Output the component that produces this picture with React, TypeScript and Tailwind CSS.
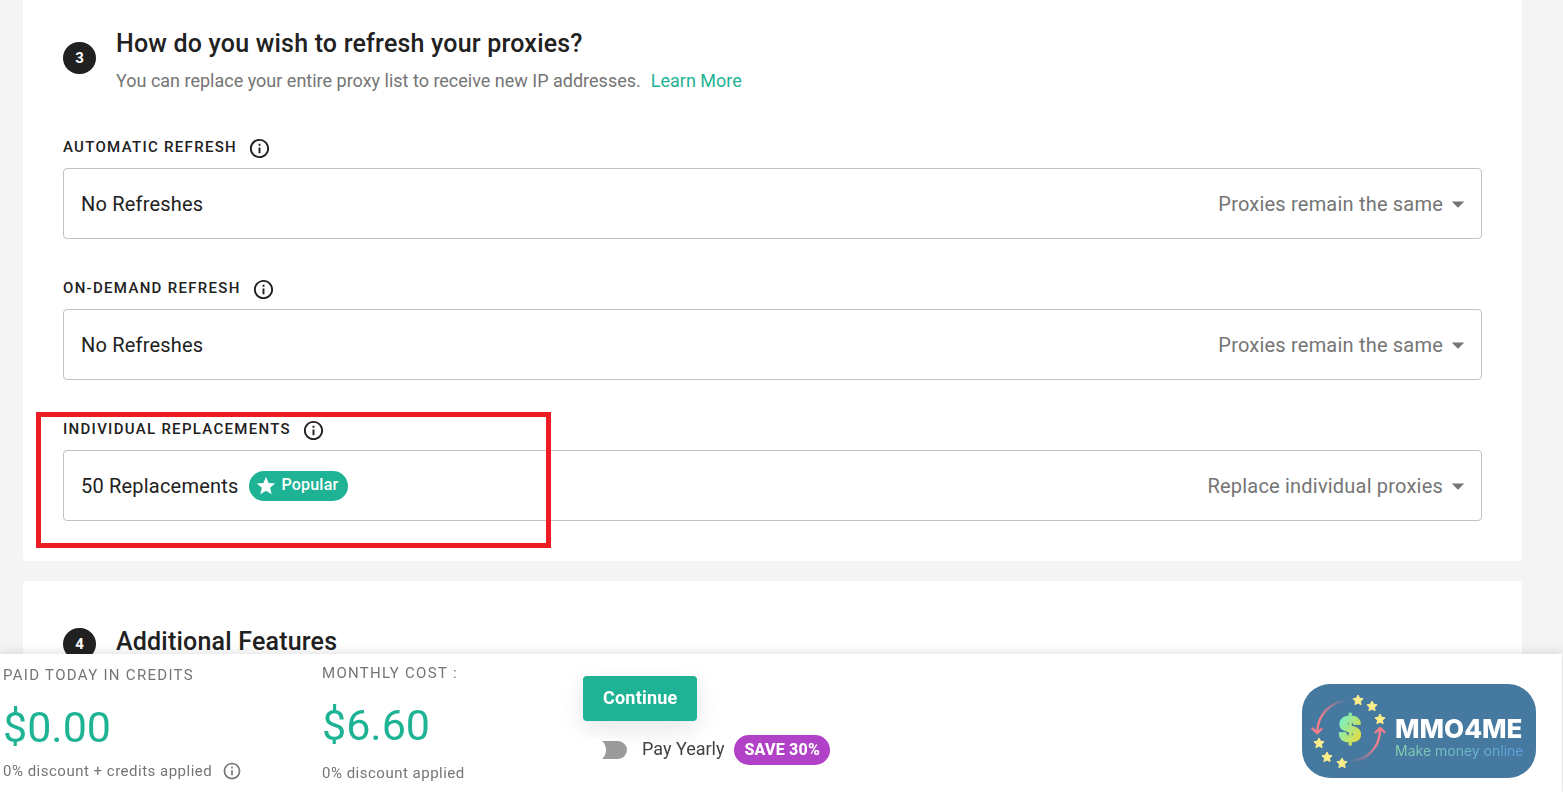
import { useState } from "react";
import { MdArrowDropDown, MdInfoOutline, MdStar } from "react-icons/md";

interface RefreshField {
  id: string;
  label: string;
  value: string;
  note: string;
  popular?: boolean;
  marked?: boolean;
}

const fields: RefreshField[] = [
  {
    id: "automatic",
    label: "AUTOMATIC REFRESH",
    value: "No Refreshes",
    note: "Proxies remain the same",
  },
  {
    id: "on-demand",
    label: "ON-DEMAND REFRESH",
    value: "No Refreshes",
    note: "Proxies remain the same",
  },
  {
    id: "individual",
    label: "INDIVIDUAL REPLACEMENTS",
    value: "50 Replacements",
    note: "Replace individual proxies",
    popular: true,
    marked: true,
  },
];

const stars = [
  [56, 16],
  [70, 22],
  [78, 35],
  [17, 59],
  [25, 73],
  [40, 79],
];

function StepNumber({ value }: { value: number }) {
  return (
    <span className="flex h-8 w-[33px] shrink-0 items-center justify-center rounded-full bg-[#212121] text-[15px] font-bold text-white">
      {value}
    </span>
  );
}

function Field({ field }: { field: RefreshField }) {
  return (
    <div className="relative">
      <div className="flex h-6 items-center gap-[11px]">
        <label
          htmlFor={field.id}
          className="pb-0.5 text-[15px] leading-5 font-medium tracking-[1.3px]"
        >
          {field.label}
        </label>
        <MdInfoOutline className="h-[23px] w-[23px]" />
      </div>
      <div className="mt-2 flex h-[71px] items-center rounded border border-[#c2c2c2] px-[17px] text-xl tracking-[0.2px]">
        <select
          id={field.id}
          className="appearance-none bg-transparent [field-sizing:content] outline-none"
        >
          <option>{field.value}</option>
        </select>
        {field.popular && (
          <span className="ml-[11px] flex h-[30px] items-center gap-1 rounded-full bg-[#1db394] pr-2.5 pl-1.5 text-base font-medium text-white">
            <MdStar className="h-[22px] w-[22px]" />
            <span className="pb-0.5">Popular</span>
          </span>
        )}
        <span className="ml-auto text-[#757575]">{field.note}</span>
        <MdArrowDropDown className="-mr-[9px] h-[30px] w-[30px] text-[#757575]" />
      </div>
      {field.marked && (
        <div className="pointer-events-none absolute -top-[6px] -left-[27px] h-[136px] w-[515px] border-5 border-[#ed1c24]" />
      )}
    </div>
  );
}

function Logo() {
  return (
    <a
      href="#"
      className="flex h-[94px] w-[234px] items-center rounded-[28px] bg-[#46799f]"
    >
      <svg viewBox="0 0 92 94" className="h-[94px] w-[92px] shrink-0">
        <defs>
          <linearGradient id="dollar" x1="0" y1="0" x2="1" y2="1">
            <stop offset="0.2" stopColor="#7df0c0" />
            <stop offset="0.85" stopColor="#e6dc3c" />
          </linearGradient>
          <linearGradient id="arcLeft" x1="1" y1="0" x2="0.2" y2="0.7">
            <stop offset="0" stopColor="#f47f8b" stopOpacity="0" />
            <stop offset="1" stopColor="#f47f8b" />
          </linearGradient>
          <linearGradient id="arcRight" x1="0" y1="1" x2="0.8" y2="0.3">
            <stop offset="0" stopColor="#f47f8b" stopOpacity="0" />
            <stop offset="1" stopColor="#f47f8b" />
          </linearGradient>
        </defs>
        <g fill="none" strokeWidth="2.4" strokeLinecap="round" strokeLinejoin="round">
          <path d="M46 16.5C29 17 15 31 15.3 49" stroke="url(#arcLeft)" />
          <path d="M10.500 44.500L15.300 49L19.500 45" stroke="#f47f8b" />
          <path d="M48 77C65 77 78.500 63 78 44.500" stroke="url(#arcRight)" />
          <path d="M73.500 48.500L78 44L82.500 48.200" stroke="#f47f8b" />
        </g>
        {stars.map(([x, y]) => (
          <path
            key={x}
            transform={`translate(${x} ${y})`}
            d="M0-5L1.600-1.800L5-1.300L2.500 1.200L3.100 4.700L0 3L-3.100 4.700L-2.500 1.200L-5-1.300L-1.600-1.800Z"
            fill="#fdee8c"
            stroke="#fdee8c"
            strokeLinejoin="round"
          />
        ))}
        <text
          x="48"
          y="58"
          textAnchor="middle"
          fontFamily="Inter, sans-serif"
          fontSize="35"
          fontWeight="900"
          fill="url(#dollar)"
          stroke="url(#dollar)"
          strokeLinejoin="round"
        >
          $
        </text>
      </svg>
      <span className="flex flex-col pt-4 pl-px font-[Inter,sans-serif] whitespace-nowrap">
        <span className="text-[26px] leading-6 font-extrabold text-white">
          MMO4ME
        </span>
        <span className="bg-linear-to-r from-[#85d3ab] to-[#5e9fdd] bg-clip-text text-sm leading-5 text-transparent">
          Make money online
        </span>
      </span>
    </a>
  );
}

function App() {
  const [yearly, setYearly] = useState(false);

  return (
    <div className="h-screen overflow-hidden bg-[#f4f4f4] font-[Roboto,sans-serif] text-[#212121]">
      <main className="flex flex-col gap-5 pr-[41px] pl-[23px]">
        <section className="rounded-b bg-white px-10 pt-7 pb-10">
          <div className="flex gap-5">
            <div className="pt-3.5">
              <StepNumber value={3} />
            </div>
            <div>
              <h2 className="text-[25px] leading-8 font-medium tracking-[0.2px]">
                How do you wish to refresh your proxies?
              </h2>
              <p className="mt-[9px] text-lg leading-6 text-[#757575]">
                You can replace your entire proxy list to receive new IP addresses.
                <a href="#" className="ml-2.5 text-[#1db394]">
                  Learn More
                </a>
              </p>
            </div>
          </div>
          <div className="mt-[43px] flex flex-col gap-[38px]">
            {fields.map((field) => (
              <Field key={field.id} field={field} />
            ))}
          </div>
        </section>

        <section className="flex gap-5 rounded bg-white px-10 pt-[45px] pb-40">
          <div className="pt-0.5">
            <StepNumber value={4} />
          </div>
          <h2 className="text-[25px] leading-8 font-medium tracking-[0.2px]">
            Additional Features
          </h2>
        </section>
      </main>

      <footer className="fixed right-px bottom-0 left-0 flex h-[138px] bg-white pr-[26px] pl-[3px] text-[#757575] shadow-[0_0_12px_rgba(0,0,0,0.15)]">
        <div className="w-[319px] pt-[11px]">
          <p className="text-[15px] leading-5 tracking-[1.3px]">PAID TODAY IN CREDITS</p>
          <p className="mt-4 text-[43px] leading-[52px] text-[#1db394]">$0.00</p>
          <p className="mt-2 flex items-center gap-2.5 text-[15px] leading-5 tracking-[0.5px]">
            0% discount + credits applied
            <MdInfoOutline className="h-5 w-5" />
          </p>
        </div>
        <div className="w-[261px] pt-[9px]">
          <p className="text-[15px] leading-5 tracking-[1.3px]">MONTHLY COST :</p>
          <p className="mt-4 text-[43px] leading-[52px] text-[#1db394]">$6.60</p>
          <p className="mt-3 text-[15px] leading-5 tracking-[0.5px]">
            0% discount applied
          </p>
        </div>
        <div className="pt-[22px]">
          <button
            type="button"
            className="h-[45px] rounded bg-[#1db394] px-5 pb-0.5 text-lg font-bold tracking-[0.2px] text-white shadow-[0_8px_24px_rgba(0,0,0,0.1)]"
          >
            Continue
          </button>
          <div className="mt-3.5 flex h-[30px] items-center pl-2">
            <input
              id="yearly"
              type="checkbox"
              checked={yearly}
              onChange={() => setYearly(!yearly)}
              className="relative h-[18px] w-9 appearance-none rounded-full bg-[#9b9b9b] before:absolute before:-top-[3px] before:-left-[9px] before:h-6 before:w-6 before:rounded-full before:bg-white checked:bg-[#1db394] checked:before:left-5"
            />
            <label htmlFor="yearly" className="ml-[15px] pb-0.5 text-lg text-[#424242]">
              Pay Yearly
            </label>
            <span className="ml-2.5 flex h-[30px] items-center rounded-full bg-[#b141c6] px-2.5 text-base font-extrabold tracking-[0.2px] text-white">
              SAVE 30%
            </span>
          </div>
        </div>
        <div className="ml-auto pt-[30px]">
          <Logo />
        </div>
      </footer>
    </div>
  );
}

export default App;
